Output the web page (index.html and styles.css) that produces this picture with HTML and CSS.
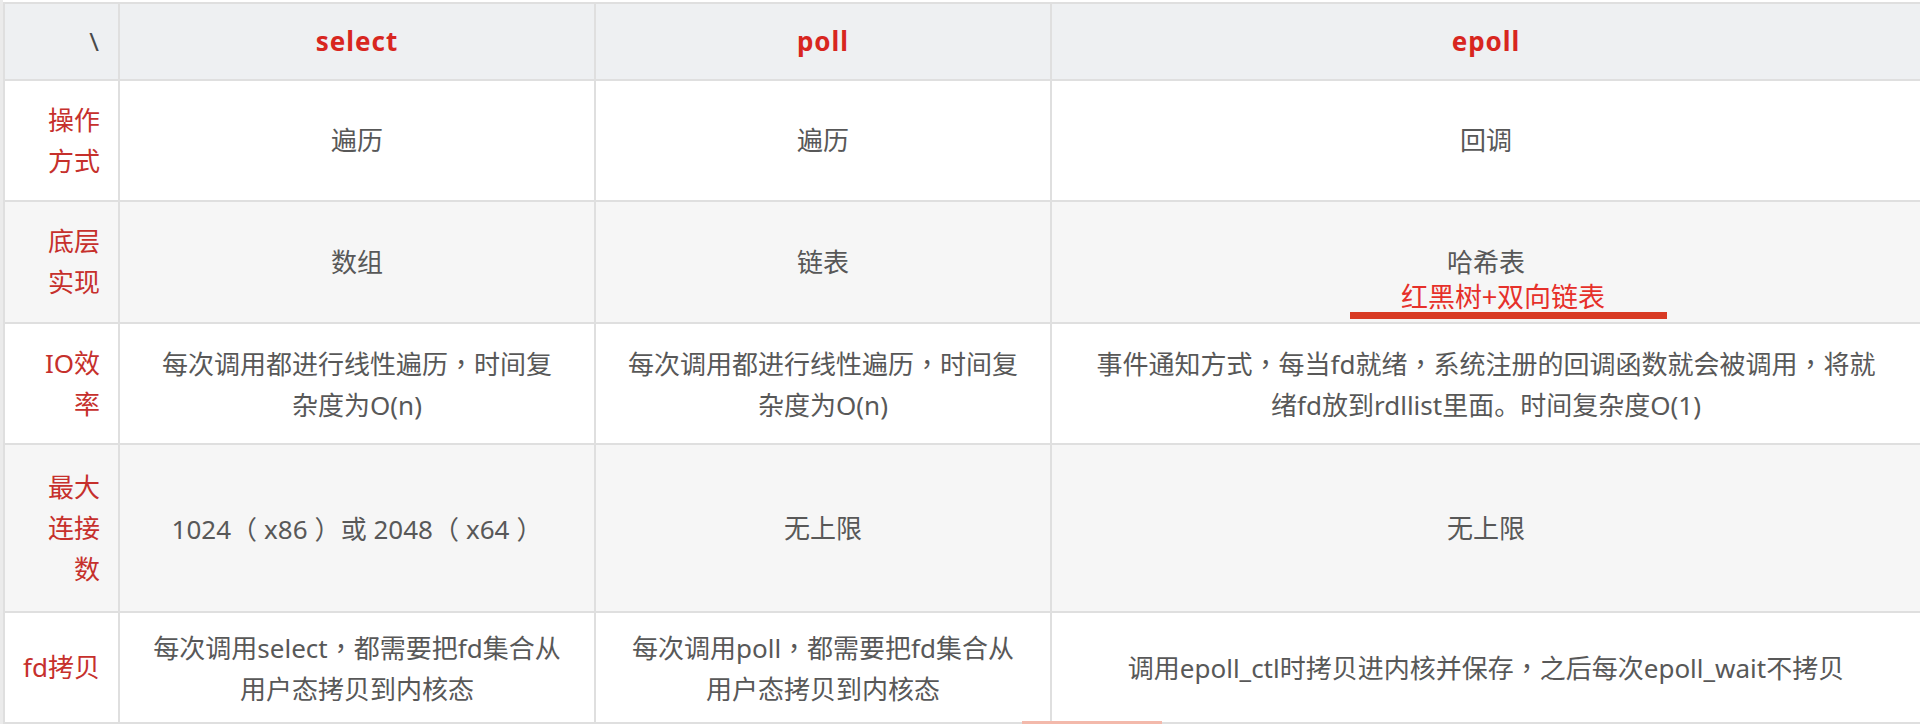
FILE: index.html
```html
<!DOCTYPE html>
<html lang="zh-CN">
<head>
<meta charset="utf-8">
<title>select / poll / epoll</title>
<link rel="stylesheet" href="styles.css">
</head>
<body>
<div class="page">
  <table class="cmp">
    <colgroup>
      <col class="c-label">
      <col class="c-select">
      <col class="c-poll">
      <col class="c-epoll">
    </colgroup>
    <thead>
      <tr class="r-head">
        <th class="corner">\</th>
        <th class="api">select</th>
        <th class="api">poll</th>
        <th class="api">epoll</th>
      </tr>
    </thead>
    <tbody>
      <tr class="r1">
        <th class="label">操作<br>方式</th>
        <td>遍历</td>
        <td>遍历</td>
        <td>回调</td>
      </tr>
      <tr class="r2 alt">
        <th class="label">底层<br>实现</th>
        <td>数组</td>
        <td>链表</td>
        <td class="anno-cell">哈希表
          <span class="anno-text">红黑树+双向链表</span>
          <span class="anno-bar"></span>
        </td>
      </tr>
      <tr class="r3">
        <th class="label">IO效<br>率</th>
        <td>每次调用都进行线性遍历<span class="p" lang="zh-TW">，</span>时间复<br>杂度为O(n)</td>
        <td>每次调用都进行线性遍历<span class="p" lang="zh-TW">，</span>时间复<br>杂度为O(n)</td>
        <td>事件通知方式<span class="p" lang="zh-TW">，</span>每当fd就绪<span class="p" lang="zh-TW">，</span>系统注册的回调函数就会被调用<span class="p" lang="zh-TW">，</span>将就<br>绪fd放到rdllist里面。时间复杂度O(1)</td>
      </tr>
      <tr class="r4 alt">
        <th class="label">最大<br>连接<br>数</th>
        <td>1024<span class="po">（</span>x86<span class="pc">）</span>或 2048<span class="po">（</span>x64<span class="pc">）</span></td>
        <td>无上限</td>
        <td>无上限</td>
      </tr>
      <tr class="r5">
        <th class="label">fd拷贝</th>
        <td>每次调用select<span class="p" lang="zh-TW">，</span>都需要把fd集合从<br>用户态拷贝到内核态</td>
        <td>每次调用poll<span class="p" lang="zh-TW">，</span>都需要把fd集合从<br>用户态拷贝到内核态</td>
        <td>调用epoll_ctl时拷贝进内核并保存<span class="p" lang="zh-TW">，</span>之后每次epoll_wait不拷贝</td>
      </tr>
    </tbody>
  </table>
  <span class="edge-mark"></span>
</div>
</body>
</html>
```

FILE: styles.css
```css
html, body {
  margin: 0;
  padding: 0;
  background: #ffffff;
}

body {
  width: 1920px;
  height: 724px;
  overflow: hidden;
  font-family: "Noto Sans", "Noto Sans CJK SC", sans-serif;
}

.page {
  position: relative;
  padding-top: 2px;
  border-left: 3px solid #ebebeb;
  height: 722px;
}

.cmp {
  width: 1917px;
  table-layout: fixed;
  border-collapse: collapse;
  border-left: 2px solid #d8d8d8;
  border-right: 2px solid #cfcfcf;
  font-size: 26px;
  color: #585858;
}

.c-label { width: 115px; }
.c-select { width: 476px; }
.c-poll { width: 456px; }
.c-epoll { width: 870px; }

.cmp th,
.cmp td {
  border: 2px solid #dfdfdf;
  padding: 0;
  text-align: center;
  vertical-align: middle;
  line-height: 41px;
  white-space: nowrap;
  font-weight: 400;
}

.r-head th {
  height: 75px;
  background: #eef0f2;
}

.r-head .api {
  color: #d8261f;
  font-weight: 700;
  font-size: 26px;
  letter-spacing: 1px;
}

.r-head .corner {
  text-align: right;
  padding-right: 19px;
  color: #4a4a4a;
  font-size: 26px;
}

.cmp .label {
  text-align: right;
  padding-right: 18px;
  color: #c6302c;
}

.r1 td, .r1 th { height: 119px; }
.r2 td, .r2 th { height: 120px; }
.r3 td, .r3 th { height: 119px; }
.r4 td, .r4 th { height: 166px; }
.r5 td, .r5 th { height: 109px; }

.cmp tbody tr { background: #ffffff; }
.cmp tbody tr.alt { background: #f6f6f6; }

.p {
  font-family: "Noto Sans CJK TC", "Noto Sans CJK SC", sans-serif;
}

.po,
.pc {
  font-family: "Noto Sans CJK SC", sans-serif;
}

.po { padding-right: 7px; }
.pc { padding-left: 7px; }

.anno-cell {
  position: relative;
}

.anno-text {
  position: absolute;
  left: 349px;
  top: 77px;
  font-family: "Noto Sans CJK SC", sans-serif;
  font-weight: 400;
  font-size: 27px;
  line-height: 34px;
  color: #e6302a;
}

.anno-bar {
  position: absolute;
  left: 298px;
  top: 110px;
  width: 317px;
  height: 7px;
  background: #d83a24;
}

.edge-mark {
  position: absolute;
  left: 1019px;
  top: 721px;
  width: 140px;
  height: 3px;
  background: #f3b9ab;
}
```
